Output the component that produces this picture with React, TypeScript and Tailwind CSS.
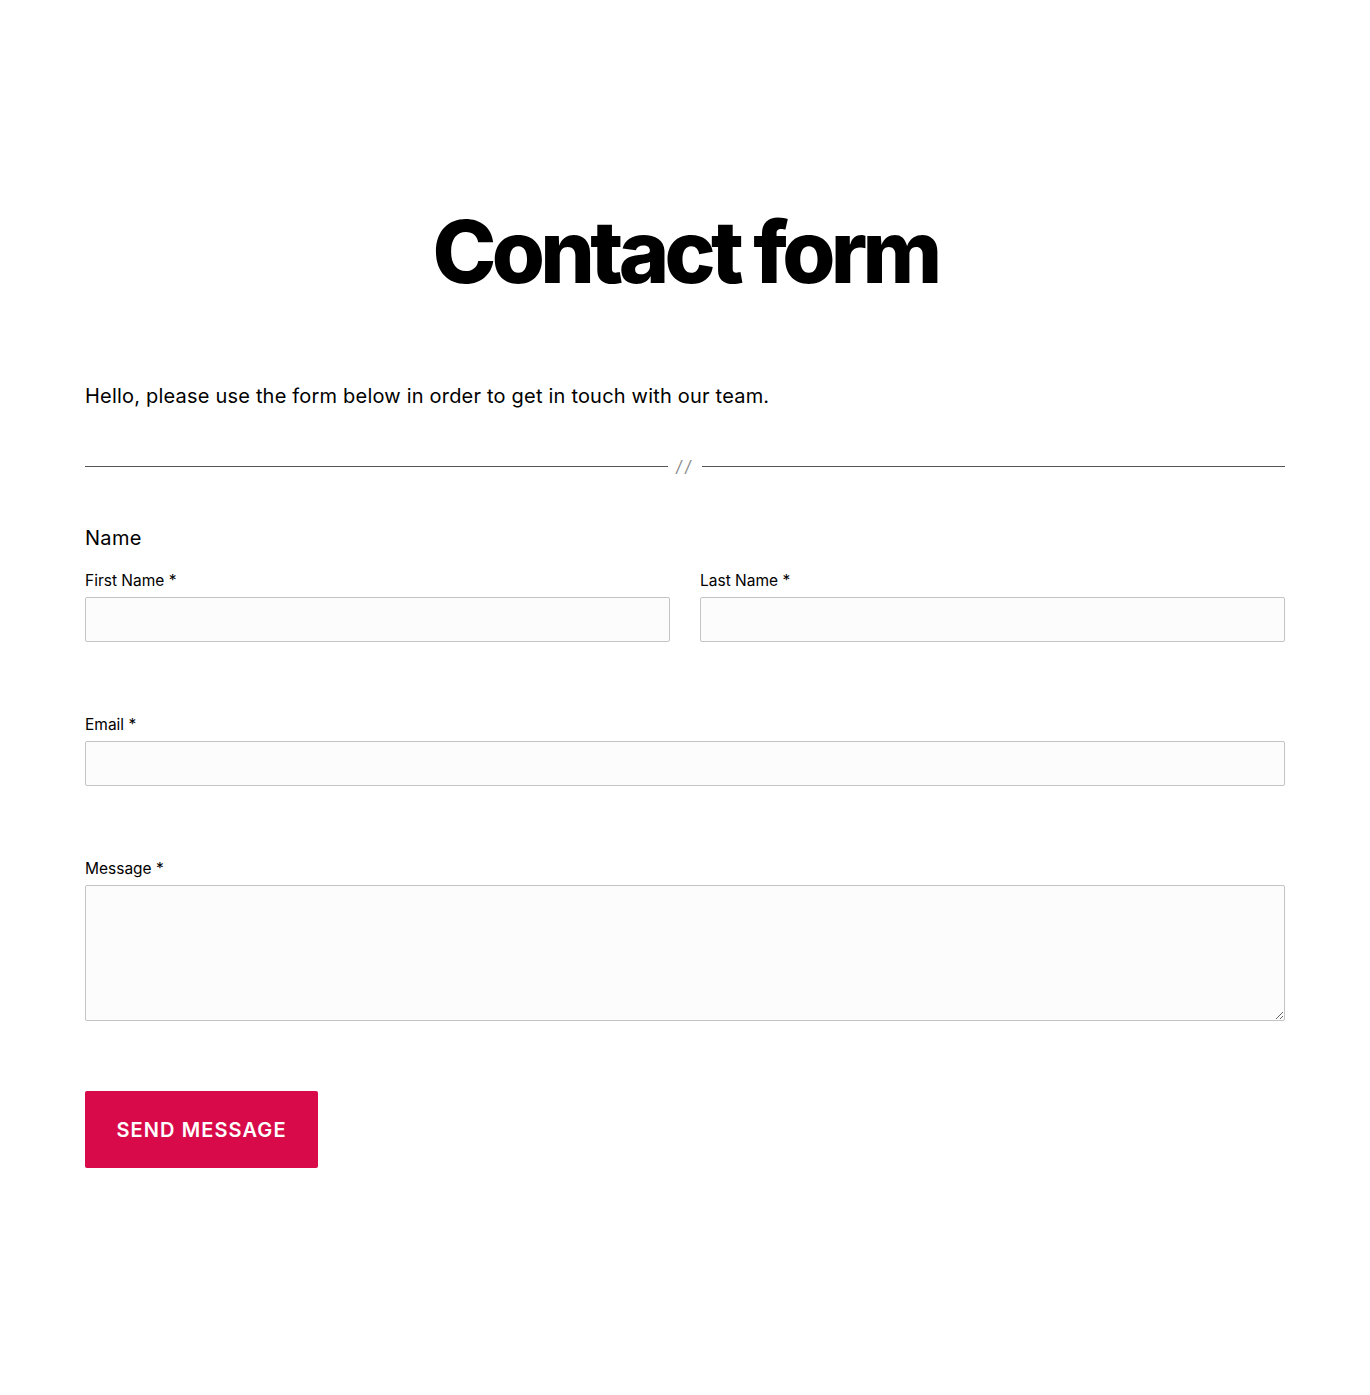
import React from "react";

const inputCls =
  "w-full h-[45px] rounded-[2px] border border-[#c4c4c4] bg-[#fcfcfc] px-3 outline-none";

export default function App() {
  return (
    <div className="min-h-[1395px] bg-white text-black font-['Inter',sans-serif]">
      <div className="mx-auto w-[1200px] pt-[200px]">
        <h1 className="text-center text-[86px] font-extrabold leading-[104px] tracking-[-0.055em]">
          Contact form
        </h1>

        <p className="mt-[77px] text-[20px] leading-[30px] tracking-[0.01em]">
          Hello, please use the form below in order to get in touch with our team.
        </p>

        <div className="mt-[43px] flex items-center gap-2">
          <div className="h-px flex-1 bg-[#555]" />
          <span className="text-[16px] tracking-[0.2em] text-[#888] italic">//</span>
          <div className="h-px flex-1 bg-[#555]" />
        </div>

        <form className="mt-[45px]">
          <div className="text-[20px] leading-[30px] tracking-[0.015em]">Name</div>
          <div className="mt-[18px] grid grid-cols-2 gap-[30px]">
            <label className="block">
              <span className="block text-[15.5px] leading-[20px]">First Name *</span>
              <input className={`${inputCls} mt-[6px]`} />
            </label>
            <label className="block">
              <span className="block text-[15.5px] leading-[20px]">Last Name *</span>
              <input className={`${inputCls} mt-[6px]`} />
            </label>
          </div>

          <label className="mt-[73px] block">
            <span className="block text-[15.5px] leading-[20px]">Email *</span>
            <input className={`${inputCls} mt-[6px]`} />
          </label>

          <label className="mt-[73px] block">
            <span className="block text-[15.5px] leading-[20px]">Message *</span>
            <textarea className="mt-[6px] block h-[136px] w-full rounded-[2px] border border-[#c4c4c4] bg-[#fcfcfc] px-3 py-2 outline-none" />
          </label>

          <button
            type="button"
            className="mt-[70px] h-[77px] w-[233px] rounded-[2px] bg-[#d80a4a] text-[20px] font-semibold uppercase tracking-[0.055em] text-white"
          >
            Send Message
          </button>
        </form>
      </div>
    </div>
  );
}
